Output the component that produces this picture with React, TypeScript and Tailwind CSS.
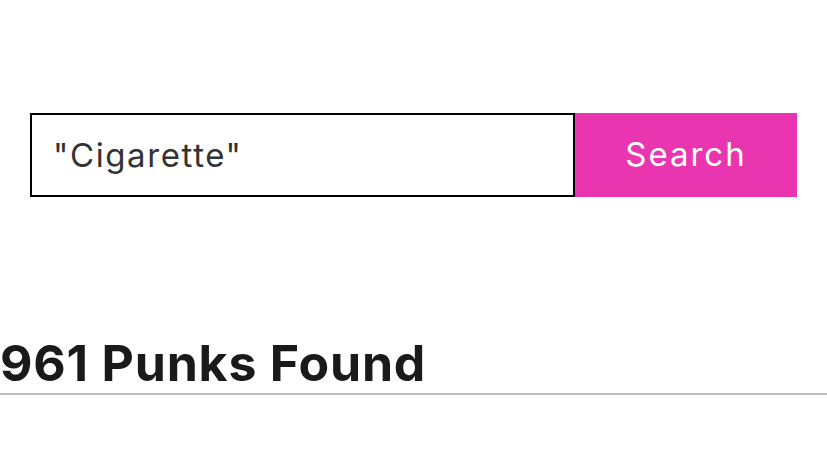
import React, { useState } from 'react';

const App: React.FC = () => {
    const [query, setQuery] = useState('"Cigarette"');

    return (
        <div className="w-[827px] h-[473px] bg-white overflow-hidden" style={{ fontFamily: 'Inter, "DejaVu Sans", sans-serif' }}>
            <div className="pt-[113px] pl-[30px]">
                <form className="flex h-[84px] w-[767px]" onSubmit={(e) => e.preventDefault()}>
                    <input
                        value={query}
                        onChange={(e) => setQuery(e.target.value)}
                        className="w-[545px] h-full border-2 border-black pl-[21px] text-[33px] tracking-[1.6px] text-[#333333] outline-none"
                    />
                    <button
                        type="submit"
                        className="flex-1 h-full bg-[#e935b0] text-white text-[33px] tracking-[2px]"
                    >
                        Search
                    </button>
                </form>
            </div>

            <div className="mt-[138px]">
                <h2 className="text-[50px] leading-[56px] font-bold tracking-[0.8px] text-[#1a1a1a] pb-[2px] border-b-2 border-[#bdbdbd]">
                    961 Punks Found
                </h2>
            </div>
        </div>
    );
};

export default App;
